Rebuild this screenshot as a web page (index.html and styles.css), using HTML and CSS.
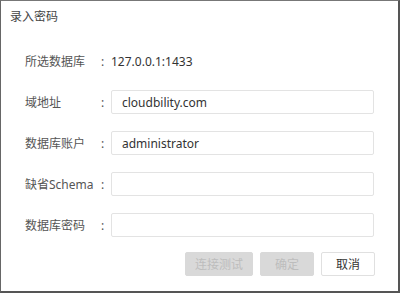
FILE: index.html
```html
<!DOCTYPE html>
<html lang="zh-CN">
<head>
  <meta charset="UTF-8">
  <title>录入密码</title>
  <link rel="stylesheet" href="styles.css">
</head>
<body>
<div class="dialog">
  <div class="dialog-title">录入密码</div>

  <div class="form">
    <div class="row">
      <span class="label">所选数据库</span>
      <span class="colon">:</span>
      <span class="value">127.0.0.1:1433</span>
    </div>
    <div class="row">
      <span class="label">域地址</span>
      <span class="colon">:</span>
      <input class="field" type="text" value="cloudbility.com">
    </div>
    <div class="row">
      <span class="label">数据库账户</span>
      <span class="colon">:</span>
      <input class="field" type="text" value="administrator">
    </div>
    <div class="row">
      <span class="label">缺省Schema</span>
      <span class="colon">:</span>
      <input class="field" type="text" value="">
    </div>
    <div class="row">
      <span class="label">数据库密码</span>
      <span class="colon">:</span>
      <input class="field" type="password" value="">
    </div>
  </div>

  <div class="actions">
    <button class="btn btn-wide" disabled>连接测试</button>
    <button class="btn" disabled>确定</button>
    <button class="btn btn-cancel">取消</button>
  </div>
</div>
</body>
</html>
```

FILE: styles.css
```css
* {
  margin: 0;
  padding: 0;
  box-sizing: border-box;
}

body {
  font-family: "Noto Sans", "Noto Sans CJK SC", sans-serif;
  font-size: 12px;
  color: #333;
  background: #fff;
}

.dialog {
  width: 400px;
  height: 293px;
  background: #fff;
  border-top: 1px solid #777;
  border-left: 1px solid #666;
  border-right: 2px solid #555;
  border-bottom: 2px solid #555;
}

.dialog-title {
  height: 31px;
  line-height: 31px;
  padding-left: 9px;
  font-size: 12px;
  color: #444;
}

.form {
  padding: 17px 0 0 24px;
  display: flex;
  flex-direction: column;
  gap: 17px;
}

.row {
  display: flex;
  align-items: center;
  height: 24px;
}

.label {
  width: 76px;
  color: #555;
  font-size: 12px;
}

.colon {
  width: 10px;
  color: #555;
}

.value {
  font-size: 12px;
  color: #333;
}

.field {
  width: 263px;
  height: 24px;
  border: 1px solid #e3e3e3;
  border-radius: 2px;
  padding: 0 10px;
  font-family: inherit;
  font-size: 12px;
  color: #333;
  outline: none;
}

.actions {
  display: flex;
  justify-content: flex-end;
  gap: 7px;
  padding: 15px 23px 0 0;
}

.btn {
  width: 54px;
  height: 24px;
  border: 1px solid #d9d9d9;
  border-radius: 2px;
  background: #d9d9d9;
  color: #bdbdbd;
  font-family: inherit;
  font-size: 12px;
}

.btn-wide {
  width: 68px;
}

.btn-cancel {
  background: #fff;
  border-color: #e0e0e0;
  color: #333;
}
```
